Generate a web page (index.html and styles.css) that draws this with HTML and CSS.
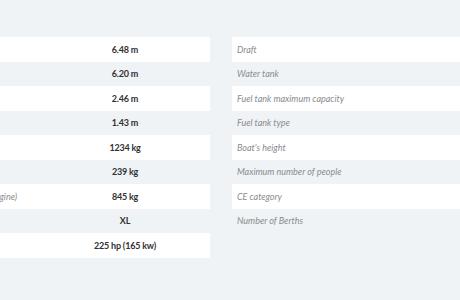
FILE: index.html
```html
<!DOCTYPE html>
<html>
<head>
<meta charset="utf-8">
<link rel="stylesheet" href="styles.css">
</head>
<body>
<div class="specs">
  <table class="spec-table">
    <tr><td class="label">Length overall</td><td class="value">6.48 m</td></tr>
    <tr><td class="label">Hull length</td><td class="value">6.20 m</td></tr>
    <tr><td class="label">Beam</td><td class="value">2.46 m</td></tr>
    <tr><td class="label">Air draft</td><td class="value">1.43 m</td></tr>
    <tr><td class="label">Weight</td><td class="value">1234 kg</td></tr>
    <tr><td class="label">Engine weight</td><td class="value">239 kg</td></tr>
    <tr><td class="label">Light craft weight (without fuel, fresh water, batteries and engine)</td><td class="value">845 kg</td></tr>
    <tr><td class="label">Shaft length</td><td class="value">XL</td></tr>
    <tr><td class="label">Maximum power</td><td class="value">225 hp (165 kw)</td></tr>
  </table>
  <table class="spec-table">
    <tr><td class="label">Draft</td><td class="value">0.40 m</td></tr>
    <tr><td class="label">Water tank</td><td class="value">45 L</td></tr>
    <tr><td class="label">Fuel tank maximum capacity</td><td class="value">150 L</td></tr>
    <tr><td class="label">Fuel tank type</td><td class="value">Integrated</td></tr>
    <tr><td class="label">Boat's height</td><td class="value">2.10 m</td></tr>
    <tr><td class="label">Maximum number of people</td><td class="value">8</td></tr>
    <tr><td class="label">CE category</td><td class="value">C</td></tr>
    <tr><td class="label">Number of Berths</td><td class="value">2</td></tr>
  </table>
</div>
</body>
</html>
```
FILE: styles.css
```css
html, body {
  margin: 0;
  padding: 0;
  background: #f0f3f6;
}
body {
  font-family: Lato, "Open Sans", sans-serif;
  overflow: hidden;
}
.specs {
  display: flex;
  align-items: flex-start;
  gap: 22px;
  padding-top: 37px;
  margin-left: -230px;
}
.spec-table {
  flex: 0 0 auto;
  width: 440px;
  border-collapse: collapse;
  table-layout: fixed;
}
.spec-table tr {
  height: 24.5px;
}
.spec-table tr:nth-child(odd) {
  background: #ffffff;
}
.spec-table td {
  padding: 0 5px;
  font-size: 9px;
  vertical-align: middle;
  white-space: nowrap;
  overflow: visible;
}
.label {
  width: 260px;
  color: #898c90;
  font-style: italic;
}
.value {
  text-align: center;
  color: #2f3133;
  font-weight: bold;
  letter-spacing: -0.2px;
}
```
